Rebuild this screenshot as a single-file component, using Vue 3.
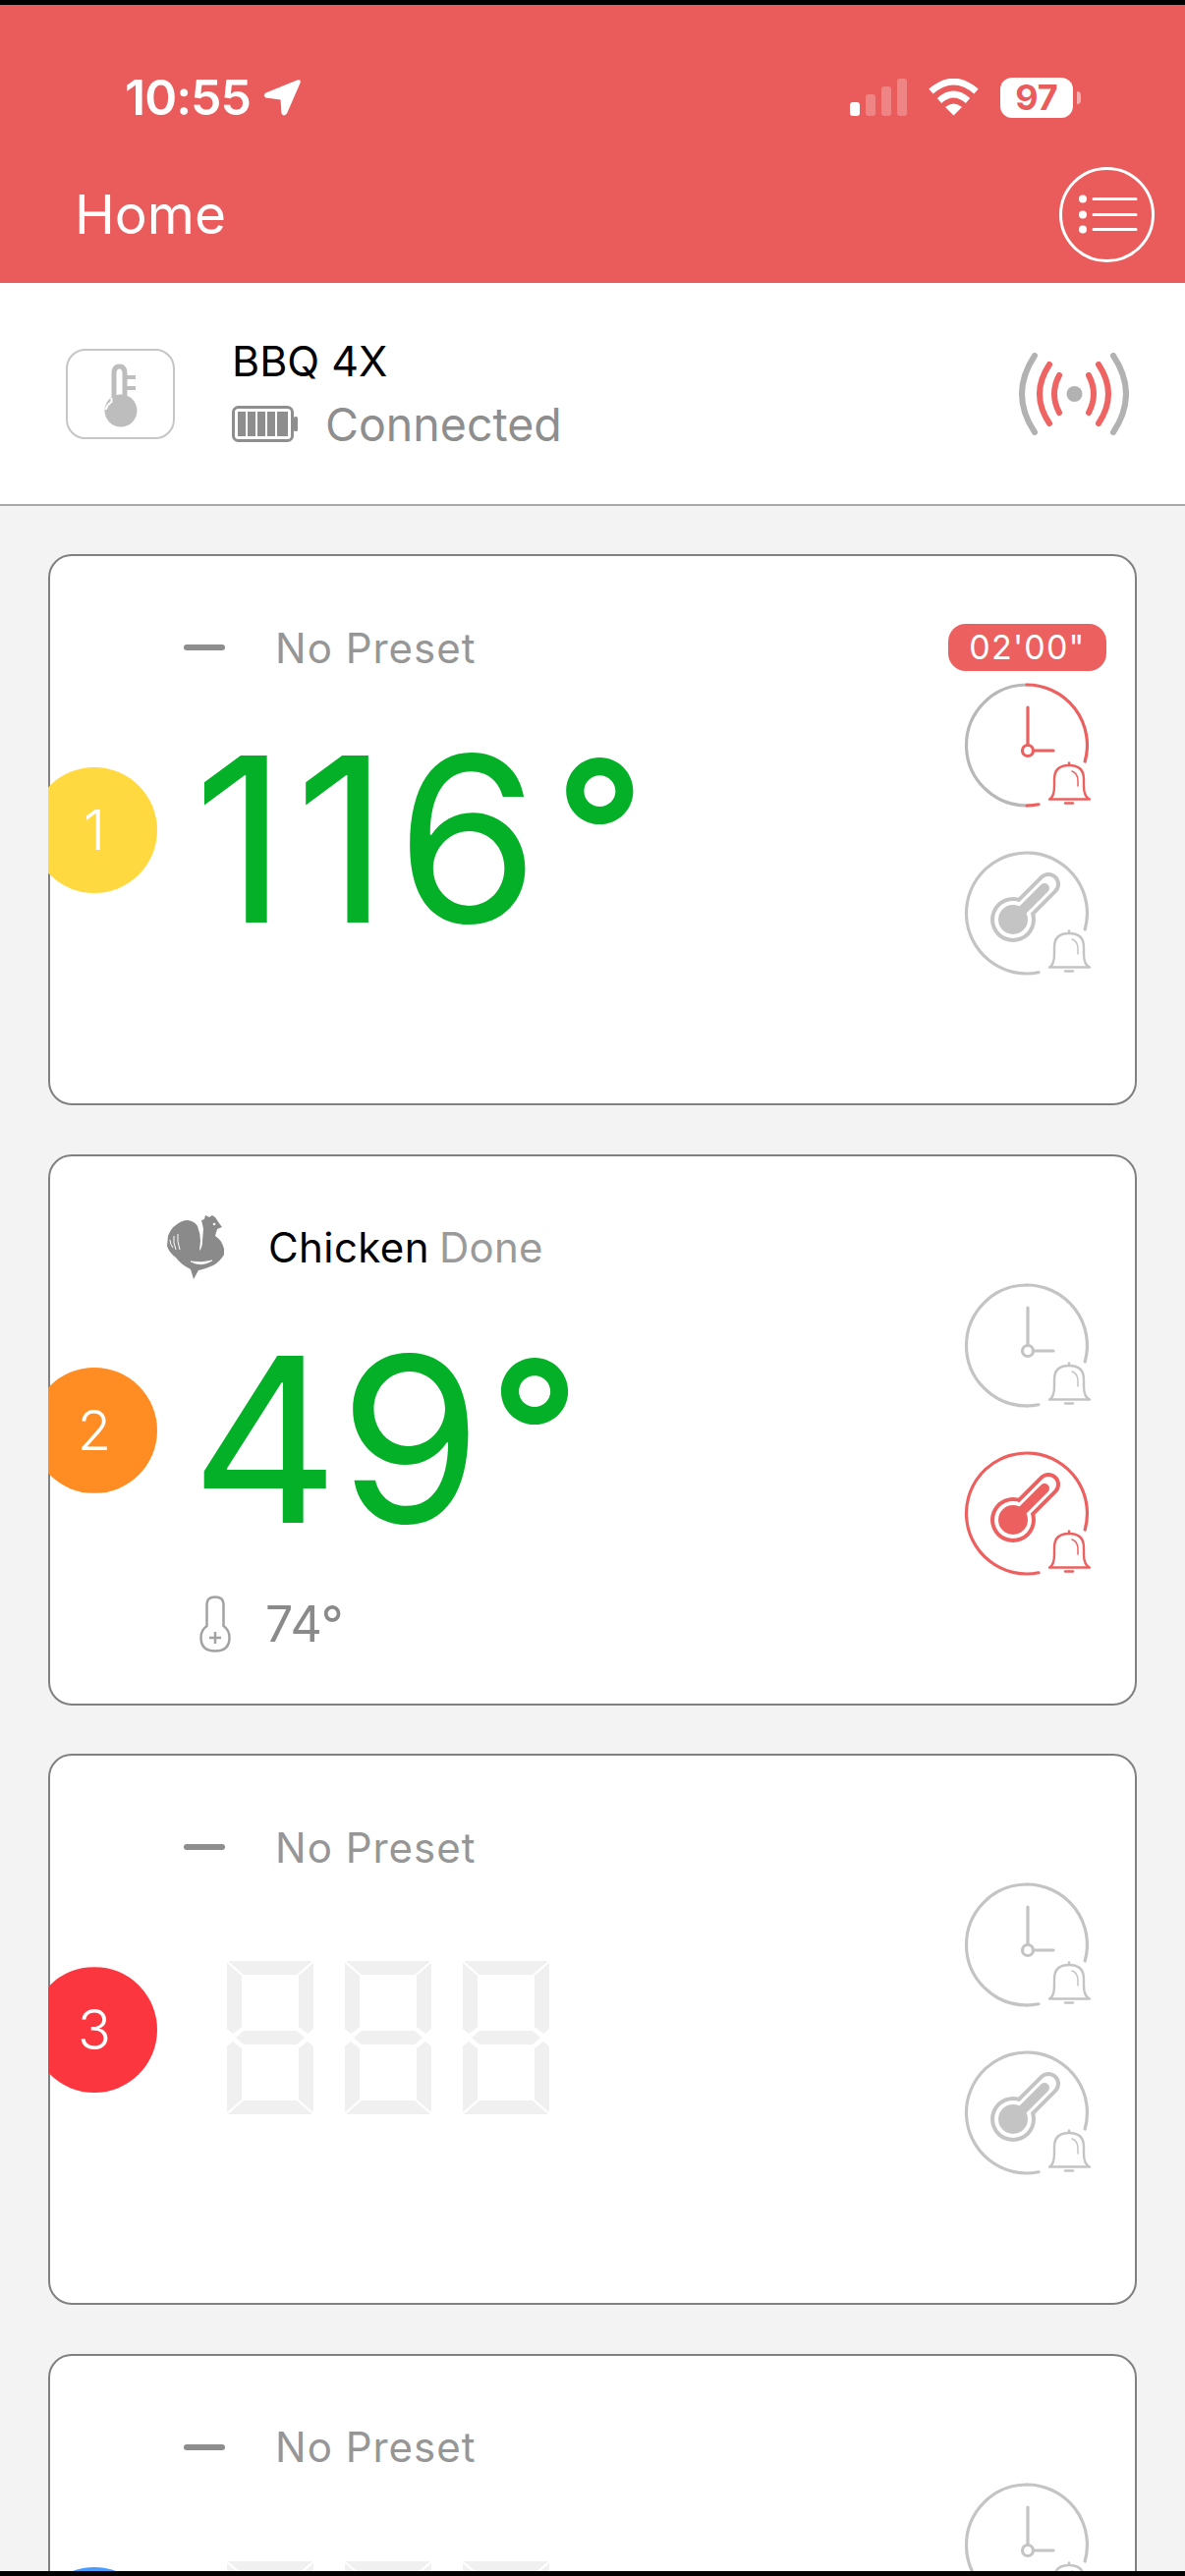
<template>
  <div class="screen">
    <div class="edge-bar"></div>

    <header class="app-header">
      <div class="status-bar">
        <div class="status-left">
          <span class="clock">10:55</span>
          <svg class="loc-arrow" viewBox="0 0 39 39"><path d="M34.500 1.500 Q38.800 0.300 37.500 4.500 L24 35.500 Q20.500 39.500 18.500 35.500 L17.500 21.500 L2.500 19.500 Q-1 17 2.500 14.500 Z" fill="#fff" /></svg>
        </div>
        <div class="status-right">
          <svg class="signal" viewBox="0 0 58 38">
            <rect x="0" y="24" width="10" height="14" rx="3" fill="#fff" />
            <rect x="16" y="16" width="10" height="22" rx="3" fill="#fff" opacity=".25" />
            <rect x="32" y="8" width="10" height="30" rx="3" fill="#fff" opacity=".25" />
            <rect x="48" y="0" width="10" height="38" rx="3" fill="#fff" opacity=".25" />
          </svg>
          <svg class="wifi" viewBox="0 0 51 38" fill="none" stroke="#fff" stroke-width="6.500">
            <path d="M2.500 13 Q25.500 -7 48.500 13" />
            <path d="M11 22.500 Q25.500 9.500 40 22.500" />
            <path d="M25.500 37.500 L17 29 Q25.500 22 34 29 Z" fill="#fff" stroke="none" />
          </svg>
          <div class="phone-battery">
            <span class="phone-battery-level">97</span>
            <span class="phone-battery-tip"></span>
          </div>
        </div>
      </div>
      <div class="title-row">
        <h1 class="title">Home</h1>
        <button type="button" class="menu-btn">
          <svg viewBox="0 0 97 97" fill="none" stroke="#fff">
            <circle cx="48.500" cy="48.500" r="47" stroke-width="3" />
            <path d="M35 32.500 H78 M35 48.500 H78 M35 63.500 H78" stroke-width="3" stroke-linecap="round" />
            <g fill="#fff" stroke="none">
              <circle cx="24" cy="32.500" r="4" />
              <circle cx="24" cy="48.500" r="4" />
              <circle cx="24" cy="63.500" r="4" />
            </g>
          </svg>
        </button>
      </div>
    </header>

    <section class="device-row">
      <div class="device-icon">
        <svg viewBox="0 0 107 88">
          <path d="M47 50 V23 Q47 16 52.500 16 Q58 16 58 23 V50" fill="none" stroke="#bdbdbd" stroke-width="5" />
          <path d="M58 27 H69 M58 38 H69" stroke="#bdbdbd" stroke-width="4" />
          <circle cx="54" cy="61" r="16.500" fill="#bdbdbd" />
          <path d="M44.500 48 L44.500 52 Q40 55 38.500 60" fill="none" stroke="#fff" stroke-width="2" />
        </svg>
      </div>
      <div class="device-info">
        <div class="device-name">BBQ 4X</div>
        <div class="device-status">
          <svg class="device-battery" viewBox="0 0 68 38">
            <rect x="1.500" y="1.500" width="60" height="34" rx="5" fill="none" stroke="#8e8e8e" stroke-width="3" />
            <rect x="6" y="6" width="8" height="25" fill="#8e8e8e" />
            <rect x="16" y="6" width="8" height="25" fill="#8e8e8e" />
            <rect x="26" y="6" width="8" height="25" fill="#8e8e8e" />
            <rect x="36" y="6" width="8" height="25" fill="#8e8e8e" />
            <rect x="46" y="6" width="11" height="25" fill="#8e8e8e" />
            <rect x="63" y="11" width="4" height="15" rx="1.500" fill="#8e8e8e" />
          </svg>
          <span>Connected</span>
        </div>
      </div>
      <svg class="link-icon" viewBox="0 0 114 84" fill="none" stroke-linecap="round" stroke-width="6">
        <path d="M18 3 Q-8 42 18 81 M98 3 Q124 42 98 81" stroke="#b2b2b2" />
        <path d="M33 12 Q13 42 33 72 M83 12 Q103 42 83 72" stroke="#ee6463" />
        <path d="M43 23 Q33 42 43 61 M73 23 Q83 42 73 61" stroke="#ee6463" />
        <circle cx="58.500" cy="42" r="8" fill="#b2b2b2" stroke="none" />
      </svg>
    </section>

    <main class="probe-list">
      <article v-for="probe in probes" :key="probe.id" class="probe-card">
        <span class="probe-badge" :style="{ background: probe.color }">{{ probe.id }}</span>

        <div class="probe-main">
          <div class="preset-row">
            <span class="preset-icon">
              <svg v-if="probe.preset" class="rooster" viewBox="0 0 58 66">
                <path d="M36 9 L35 5 L38 4 L39 0 L43 2 L46 0 L49 2 L51 5 L53 8 L56 12 L51 14 L49 21 Q55 25 57 31 Q59 36 58 40 Q54 47 47 51 Q38 55 32 56 L27 65 L24 55 Q14 50 9 43 Q2 38 0 31 L1 21 Q4 13 9 10 Q15 5 21 5 Q28 6 31 11 Q34 19 34 26 L33 36 Q36 33 36 26 L37 14 Z" fill="#8a8a8a" />
                <circle cx="48" cy="9" r="1.300" fill="#fff" />
                <path d="M3 25 Q3 29 6 33 M7 21 Q6 28 9 35 M11 19 Q10 26 13 35" stroke="#fff" stroke-width="1" fill="none" />
                <path d="M24 47 Q35 53 46 46 Q35 49 24 47 Z" fill="#fff" stroke="#fff" stroke-width=".8" />
              </svg>
              <span v-else class="preset-dash"></span>
            </span>
            <span v-if="probe.preset" class="preset-name">{{ probe.preset }}</span>
            <span v-if="probe.preset" class="preset-state">Done</span>
            <span v-else class="preset-none">No Preset</span>
          </div>

          <div v-if="probe.temp" class="probe-temp" :class="{ 'probe-temp-wide': probe.temp >= 100 }">{{ probe.temp }}<span class="degree">°</span></div>
          <div v-else class="segments">
            <svg v-for="n in 3" :key="n" viewBox="0 0 88 156" fill="#f0f0f0">
              <path d="M1 0 H87 L71 14 H17 Z" />
              <path d="M0 2 L15 15 V67 L6 74 L0 69 Z" />
              <path d="M88 2 L73 15 V67 L82 74 L88 69 Z" />
              <path d="M17 71 H71 L79 78 L71 85 H17 L9 78 Z" />
              <path d="M0 87 L6 82 L15 89 V141 L0 154 Z" />
              <path d="M88 87 L82 82 L73 89 V141 L88 154 Z" />
              <path d="M1 156 H87 L71 142 H17 Z" />
            </svg>
          </div>

          <div v-if="probe.target" class="target-row">
            <svg class="target-icon" viewBox="0 0 32 58" fill="none" stroke="#a2a2a2" stroke-width="2.500">
              <path d="M7.500 31 V9 Q7.500 1.500 16 1.500 Q24.500 1.500 24.500 9 V31 Q30.500 35 30.500 43 Q30.500 56.500 16 56.500 Q1.500 56.500 1.500 43 Q1.500 35 7.500 31 Z" />
              <path d="M16 37 V49 M10 43 H22" />
            </svg>
            <span>{{ probe.target }}°</span>
          </div>
        </div>

        <div class="probe-side">
          <span v-if="probe.timer" class="timer-pill">{{ probe.timer }}</span>

          <svg class="alarm" viewBox="0 0 130 130" fill="none" :stroke="probe.clockHot ? '#ec6060' : '#c4c4c4'" stroke-width="3.200" stroke-linecap="round">
            <path d="M64 2 A61.500 61.500 0 1 0 64 125" :stroke="probe.clockHot ? '#b8b8b8' : '#c4c4c4'" />
            <path d="M64 125 A61.500 61.500 0 0 0 76 123.800" />
            <path d="M64 2 A61.500 61.500 0 0 1 123.200 80" />
            <path d="M65 25 V63 M71 69 H91" />
            <circle cx="65" cy="69" r="5.500" />
            <g stroke-width="2.400">
              <path d="M87 118.500 Q92 116 92 105 V98 Q92 84 107 84 Q122 84 122 98 V105 Q122 116 128 118.500 Z" stroke-linejoin="round" />
              <path d="M103 122.500 H111" />
              <path d="M107 81.500 V83" />
              <path d="M110 90 Q116 92 116 100 V105" stroke-width="1.500" />
            </g>
          </svg>

          <svg class="alarm" viewBox="0 0 130 130" fill="none" :stroke="probe.tempHot ? '#ec6060' : '#c4c4c4'" stroke-width="3.200" stroke-linecap="round">
            <path d="M123.200 80 A61.500 61.500 0 1 0 76 123.800" />
            <!-- thermometer: outer band, white gap, solid core -->
            <path d="M50 70 L86 34" stroke-width="24" />
            <circle cx="50" cy="70" r="23" stroke="none" :fill="probe.tempHot ? '#ec6060' : '#c4c4c4'" />
            <path d="M50 70 L86 34" stroke="#fff" stroke-width="16" />
            <circle cx="50" cy="70" r="19" stroke="none" fill="#fff" />
            <path d="M50 70 L82 38" stroke-width="10" />
            <circle cx="50" cy="70" r="15" stroke="none" :fill="probe.tempHot ? '#ec6060' : '#c4c4c4'" />
            <g stroke-width="2.400">
              <path d="M87 118.500 Q92 116 92 105 V98 Q92 84 107 84 Q122 84 122 98 V105 Q122 116 128 118.500 Z" stroke-linejoin="round" />
              <path d="M103 122.500 H111" />
              <path d="M107 81.500 V83" />
              <path d="M110 90 Q116 92 116 100 V105" stroke-width="1.500" />
            </g>
          </svg>
        </div>
      </article>
    </main>

    <div class="edge-bar"></div>
  </div>
</template>

<script setup>
const probes = [
  { id: 1, color: "#ffd93f", preset: "", temp: 116, target: null, timer: "02'00\"", clockHot: true, tempHot: false },
  { id: 2, color: "#ff8d24", preset: "Chicken", temp: 49, target: 74, timer: "", clockHot: false, tempHot: true },
  { id: 3, color: "#fb363e", preset: "", temp: null, target: null, timer: "", clockHot: false, tempHot: false },
  { id: 4, color: "#4a9dff", preset: "", temp: null, target: null, timer: "", clockHot: false, tempHot: false },
];
</script>

<style>
html,
body {
  margin: 0;
  background: #f3f3f3;
}
</style>

<style scoped>
.screen {
  display: flex;
  flex-direction: column;
  width: 1206px;
  height: 2622px;
  overflow: hidden;
  background: #f3f3f3;
  font-family: Inter, "Liberation Sans", sans-serif;
}

.edge-bar {
  flex: none;
  height: 5px;
  background: #000;
}

.app-header {
  flex: none;
  height: 283px;
  box-sizing: border-box;
  padding-top: 72px;
  background: #e95c5b;
  color: #fff;
}

.status-bar {
  display: flex;
  justify-content: space-between;
  align-items: center;
  height: 44px;
  padding: 0 106px 0 127px;
}

.status-left,
.status-right {
  display: flex;
  align-items: center;
}

.clock {
  font-size: 50px;
  font-weight: 600;
  letter-spacing: -1px;
  line-height: 44px;
}

.loc-arrow {
  width: 39px;
  height: 39px;
  margin-left: 13px;
}

.signal {
  width: 58px;
  height: 38px;
}

.wifi {
  width: 51px;
  height: 38px;
  margin-left: 22px;
}

.phone-battery {
  display: flex;
  align-items: center;
  margin-left: 22px;
}

.phone-battery-level {
  width: 74px;
  height: 41px;
  border-radius: 12px;
  background: #fff;
  color: #e95c5b;
  font-size: 36px;
  font-weight: 700;
  line-height: 41px;
  text-align: center;
}

.phone-battery-tip {
  width: 4px;
  height: 13px;
  margin-left: 4px;
  border-radius: 0 6px 6px 0;
  background: rgba(255, 255, 255, .5);
}

.title-row {
  display: flex;
  justify-content: space-between;
  align-items: center;
  height: 97px;
  margin-top: 49px;
  padding: 0 31px 0 76px;
}

.title {
  margin: 0;
  font-size: 55px;
  font-weight: 400;
  line-height: 1;
}

.menu-btn {
  width: 97px;
  height: 97px;
  padding: 0;
  border: 0;
  background: none;
}

.menu-btn svg {
  display: block;
  width: 97px;
  height: 97px;
}

.device-row {
  flex: none;
  display: flex;
  align-items: center;
  height: 227px;
  box-sizing: border-box;
  padding: 0 57px 0 67px;
  border-bottom: 2px solid #a8a8a8;
  background: #fff;
}

.device-icon {
  flex: none;
  width: 111px;
  height: 92px;
  box-sizing: border-box;
  border: 2px solid #c6c6c6;
  border-radius: 20px;
}

.device-icon svg {
  display: block;
  width: 107px;
  height: 88px;
}

.device-info {
  flex: 1;
  margin-left: 58px;
  padding-bottom: 3px;
}

.device-name {
  font-size: 43px;
  line-height: 50px;
  color: #000;
}

.device-status {
  display: flex;
  align-items: center;
  margin-top: 15px;
  color: #8e8e8e;
  font-size: 46.500px;
  line-height: 50px;
}

.device-battery {
  width: 68px;
  height: 38px;
  margin-right: 27px;
}

.link-icon {
  flex: none;
  width: 114px;
  height: 84px;
}

.probe-list {
  flex: 1;
  min-height: 0;
  display: flex;
  flex-direction: column;
  gap: 49.670px;
  padding: 49px 49px 0;
  overflow: hidden;
}

.probe-card {
  position: relative;
  flex: none;
  display: flex;
  justify-content: space-between;
  height: 561px;
  box-sizing: border-box;
  border: 2px solid #808080;
  border-radius: 24px;
  background: #fff;
}

/* number disc, cut off at the card's left edge */
.probe-badge {
  position: absolute;
  left: -19px;
  top: 215px;
  width: 128px;
  height: 128px;
  border-radius: 50%;
  clip-path: inset(0 0 0 17px);
  color: #fff;
  font-size: 56px;
  font-weight: 300;
  line-height: 128px;
  text-align: center;
}

.probe-main {
  padding-left: 118px;
}

.preset-row {
  display: flex;
  align-items: center;
  height: 66px;
  margin-top: 60px;
  font-size: 42px;
}

.preset-icon {
  display: flex;
  align-items: center;
  justify-content: center;
  width: 60px;
  margin-right: 44px;
}

.rooster {
  width: 58px;
  height: 66px;
}

.preset-dash {
  width: 42px;
  height: 6px;
  margin-left: 18px;
  border-radius: 3px;
  background: #8e8e8e;
}

.preset-none {
  margin-left: 7px;
  color: #969696;
  letter-spacing: 1px;
}

.preset-name {
  color: #000;
  letter-spacing: .4px;
}

.preset-state {
  margin-left: 10px;
  color: #9a9a9a;
  letter-spacing: .3px;
}

.probe-temp {
  margin-top: 42px;
  margin-left: 25px;
  color: #04b027;
  font-size: 234px;
  line-height: 240px;
}

/* three digit readings run wider, the ones are spaced out */
.probe-temp-wide {
  margin-left: 28px;
  letter-spacing: 8px;
}

.degree {
  margin-left: 8px;
  font-size: 200px;
  font-weight: 600;
  letter-spacing: 0;
  line-height: 0;
  vertical-align: 21px;
}

.segments {
  display: flex;
  gap: 32px;
  margin-top: 83px;
  margin-left: 62px;
}

.segments svg {
  width: 88px;
  height: 156px;
}

.target-row {
  display: flex;
  align-items: center;
  margin-top: 38px;
  margin-left: 34px;
  color: #8a8a8a;
  font-size: 50px;
}

.target-icon {
  width: 32px;
  height: 58px;
  margin-right: 35px;
}

.probe-side {
  flex: none;
  position: relative;
  width: 130px;
  margin-right: 44px;
  padding-top: 129px;
  display: flex;
  flex-direction: column;
  gap: 41px;
}

.timer-pill {
  position: absolute;
  top: 69px;
  right: -15px;
  width: 161px;
  height: 48px;
  border-radius: 18px;
  background: #ec6060;
  color: #fff;
  font-size: 34px;
  letter-spacing: 1.200px;
  line-height: 48px;
  text-align: center;
}

.alarm {
  display: block;
  flex: none;
  width: 130px;
  height: 130px;
}
</style>
